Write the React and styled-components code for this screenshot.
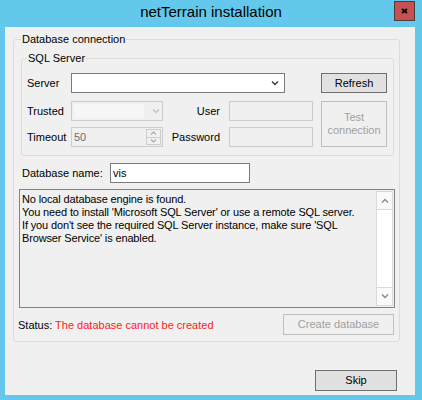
import React from 'react';
import styled, { createGlobalStyle } from 'styled-components';

const GlobalStyle = createGlobalStyle`
  html, body {
    margin: 0;
    padding: 0;
    background: #63c8eb;
  }
  body {
    font-family: "Liberation Sans", Arial, sans-serif;
    font-size: 11px;
    color: #000;
  }
`;

const Window = styled.div`
  width: 422px;
  height: 400px;
  background: #63c8eb;
  display: flex;
  flex-direction: column;
  box-sizing: border-box;
`;

const TitleBar = styled.div`
  height: 27px;
  display: grid;
  grid-template-columns: 1fr auto 1fr;
  align-items: start;
`;

const Title = styled.div`
  grid-column: 2;
  font-size: 15px;
  line-height: 24px;
  color: #000;
`;

const CloseButton = styled.div`
  grid-column: 3;
  justify-self: end;
  width: 21px;
  height: 20px;
  box-sizing: border-box;
  margin: 1px 7px 0 0;
  background: #c75050;
  border: 1px solid #4a3a3a;
  display: flex;
  align-items: center;
  justify-content: center;
`;

const Client = styled.div`
  flex: 1;
  margin: 0 7px 5px 5px;
  background: #f0f0f0;
  display: flex;
  flex-direction: column;
  padding: 12px 0 0 8px;
`;

const GroupBox = styled.div`
  position: relative;
  box-sizing: border-box;
  width: ${(p) => p.$width}px;
  height: ${(p) => (p.$height ? `${p.$height}px` : 'auto')};
  margin-left: ${(p) => p.$indent || 0}px;
  border: 1px solid #dcdcdc;
  border-radius: 3px;
  padding: ${(p) => p.$pad};
`;

const Caption = styled.span`
  position: absolute;
  top: -8px;
  left: ${(p) => p.$left}px;
  padding: 0 1px;
  line-height: 14px;
  background: #f0f0f0;
`;

const SqlGrid = styled.div`
  display: grid;
  grid-template-columns: 49px 92px 66px 84px 8px 66px;
  grid-template-rows: 28px 26px 20px;
  align-items: start;
`;

const Label = styled.div`
  height: 20px;
  display: flex;
  align-items: center;
  justify-content: ${(p) => (p.$right ? 'flex-end' : 'flex-start')};
  padding: ${(p) => (p.$right ? '0 9px 0 0' : '0 0 0 5px')};
  grid-column: ${(p) => p.$col};
  grid-row: ${(p) => p.$row};
`;

const Field = styled.div`
  box-sizing: border-box;
  height: 20px;
  width: ${(p) => p.$width}px;
  grid-column: ${(p) => p.$col || 'auto'};
  grid-row: ${(p) => p.$row || 'auto'};
  justify-self: start;
  display: flex;
  align-items: center;
  background: ${(p) => (p.$disabled ? '#f0f0f0' : '#fff')};
  border: 1px solid ${(p) => (p.$disabled ? '#cccccc' : '#7a7a7a')};
  color: ${(p) => (p.$disabled ? '#6d6d6d' : '#000')};
  padding-left: 2px;
`;

const ComboFill = styled.div`
  flex: 1;
  align-self: stretch;
  margin: 2px 7px 2px 0;
  background: ${(p) => (p.$disabled ? '#f6f6f6' : 'transparent')};
`;

const ComboArrow = styled.div`
  width: ${(p) => p.$width || 17}px;
  display: flex;
  align-items: center;
  justify-content: center;
  margin-right: 1px;
`;

const ValueText = styled.span`
  flex: 1;
`;

const Spin = styled.div`
  width: 15px;
  align-self: stretch;
  display: flex;
  flex-direction: column;
  margin: 1px 1px 1px 0;
`;

const SpinButton = styled.div`
  flex: 1;
  border: 1px solid #cccccc;
  display: flex;
  align-items: center;
  justify-content: center;
  & + & {
    border-top: none;
  }
`;

const Button = styled.div`
  box-sizing: border-box;
  width: ${(p) => p.$width}px;
  height: ${(p) => p.$height || 20}px;
  grid-column: ${(p) => p.$col || 'auto'};
  grid-row: ${(p) => p.$row || 'auto'};
  display: flex;
  align-items: center;
  justify-content: center;
  text-align: center;
  line-height: 13px;
  background: ${(p) => (p.$disabled ? '#f0f0f0' : '#e1e1e1')};
  border: 1px solid ${(p) => (p.$disabled ? '#bfbfbf' : '#707070')};
  color: ${(p) => (p.$disabled ? '#a0a0a0' : '#000')};
`;

const DbRow = styled.div`
  display: flex;
  align-items: center;
  margin-top: 7px;
  padding-left: 4px;
`;

const DbLabel = styled.span`
  width: 88px;
`;

const MessageBox = styled.div`
  box-sizing: border-box;
  margin: 6px 0 0 1px;
  width: 376px;
  height: 119px;
  border: 1px solid #828282;
  background: #f0f0f0;
  display: flex;
`;

const MessageText = styled.div`
  flex: 1;
  padding: 3px 2px;
  line-height: 13px;
  letter-spacing: -0.14px;
  white-space: nowrap;
`;

const ScrollBar = styled.div`
  width: 17px;
  margin: 1px;
  display: flex;
  flex-direction: column;
  background: #fafafa;
  border: 1px solid #dadada;
  box-sizing: border-box;
`;

const ScrollButton = styled.div`
  height: 17px;
  display: flex;
  align-items: center;
  justify-content: center;
  border-${(p) => (p.$up ? 'bottom' : 'top')}: 1px solid #dadada;
`;

const ScrollTrack = styled.div`
  flex: 1;
  background: #fff;
`;

const StatusRow = styled.div`
  display: flex;
  align-items: center;
  justify-content: space-between;
  margin: 6px 5px 6px 0;
`;

const Error = styled.span`
  color: #ff2020;
`;

const Footer = styled.div`
  margin-top: auto;
  display: flex;
  justify-content: flex-end;
  padding: 0 18px 4px 0;
`;

const Chevron = ({ up, color = '#444' }) => (
  <svg width="8" height="5" viewBox="0 0 8 5">
    <polyline
      points={up ? '1,4.5 4,1.5 7,4.5' : '1,0.5 4,3.5 7,0.5'}
      fill="none"
      stroke={color}
      strokeWidth="1.4"
    />
  </svg>
);

const SmallArrow = ({ up }) => (
  <svg width="7" height="4" viewBox="0 0 7 4">
    <polyline
      points={up ? '1,3.5 3.5,1 6,3.5' : '1,0.5 3.5,3 6,0.5'}
      fill="none"
      stroke="#a8a8a8"
      strokeWidth="1.1"
    />
  </svg>
);

const App = () => (
  <Window>
    <GlobalStyle />
    <TitleBar>
      <Title>netTerrain installation</Title>
      <CloseButton>
        <svg width="7" height="6" viewBox="0 0 7 6">
          <path d="M1 1 L6 5 M6 1 L1 5" stroke="#000" strokeWidth="1.8" />
        </svg>
      </CloseButton>
    </TitleBar>
    <Client>
      <GroupBox $width={387} $pad="18px 0 0 4px">
        <Caption $left={7}>Database connection</Caption>
        <GroupBox $width={373} $height={98} $indent={3} $pad="14px 0 0 0">
          <Caption $left={5}>SQL Server</Caption>
          <SqlGrid>
            <Label $col={1} $row={1}>Server</Label>
            <Field $col="2 / span 3" $row={1} $width={214}>
              <ValueText />
              <ComboArrow>
                <Chevron color="#3c3c3c" />
              </ComboArrow>
            </Field>
            <Button $col={6} $row={1} $width={66}>Refresh</Button>

            <Label $col={1} $row={2}>Trusted</Label>
            <Field $col={2} $row={2} $width={92} $disabled>
              <ComboFill $disabled />
              <ComboArrow $width={10}>
                <Chevron color="#c4c4c4" />
              </ComboArrow>
            </Field>
            <Label $col={3} $row={2} $right>User</Label>
            <Field $col={4} $row={2} $width={84} $disabled />
            <Button $col={6} $row="2 / span 2" $width={66} $height={46} $disabled>
              Test
              <br />
              connection
            </Button>

            <Label $col={1} $row={3}>Timeout</Label>
            <Field $col={2} $row={3} $width={92} $disabled>
              <ValueText>50</ValueText>
              <Spin>
                <SpinButton>
                  <SmallArrow up />
                </SpinButton>
                <SpinButton>
                  <SmallArrow />
                </SpinButton>
              </Spin>
            </Field>
            <Label $col={3} $row={3} $right>Password</Label>
            <Field $col={4} $row={3} $width={84} $disabled />
          </SqlGrid>
        </GroupBox>

        <DbRow>
          <DbLabel>Database name:</DbLabel>
          <Field $width={140}>vis</Field>
        </DbRow>

        <MessageBox>
          <MessageText>
            No local database engine is found.
            <br />
            You need to install 'Microsoft SQL Server' or use a remote SQL server.
            <br />
            If you don't see the required SQL Server instance, make sure 'SQL
            <br />
            Browser Service' is enabled.
          </MessageText>
          <ScrollBar>
            <ScrollButton $up>
              <Chevron up color="#8a8a8a" />
            </ScrollButton>
            <ScrollTrack />
            <ScrollButton>
              <Chevron color="#8a8a8a" />
            </ScrollButton>
          </ScrollBar>
        </MessageBox>

        <StatusRow>
          <span>
            Status: <Error>The database cannot be created</Error>
          </span>
          <Button $width={111} $height={21} $disabled>
            Create database
          </Button>
        </StatusRow>
      </GroupBox>
      <Footer>
        <Button $width={82} $height={21}>Skip</Button>
      </Footer>
    </Client>
  </Window>
);

export default App;
